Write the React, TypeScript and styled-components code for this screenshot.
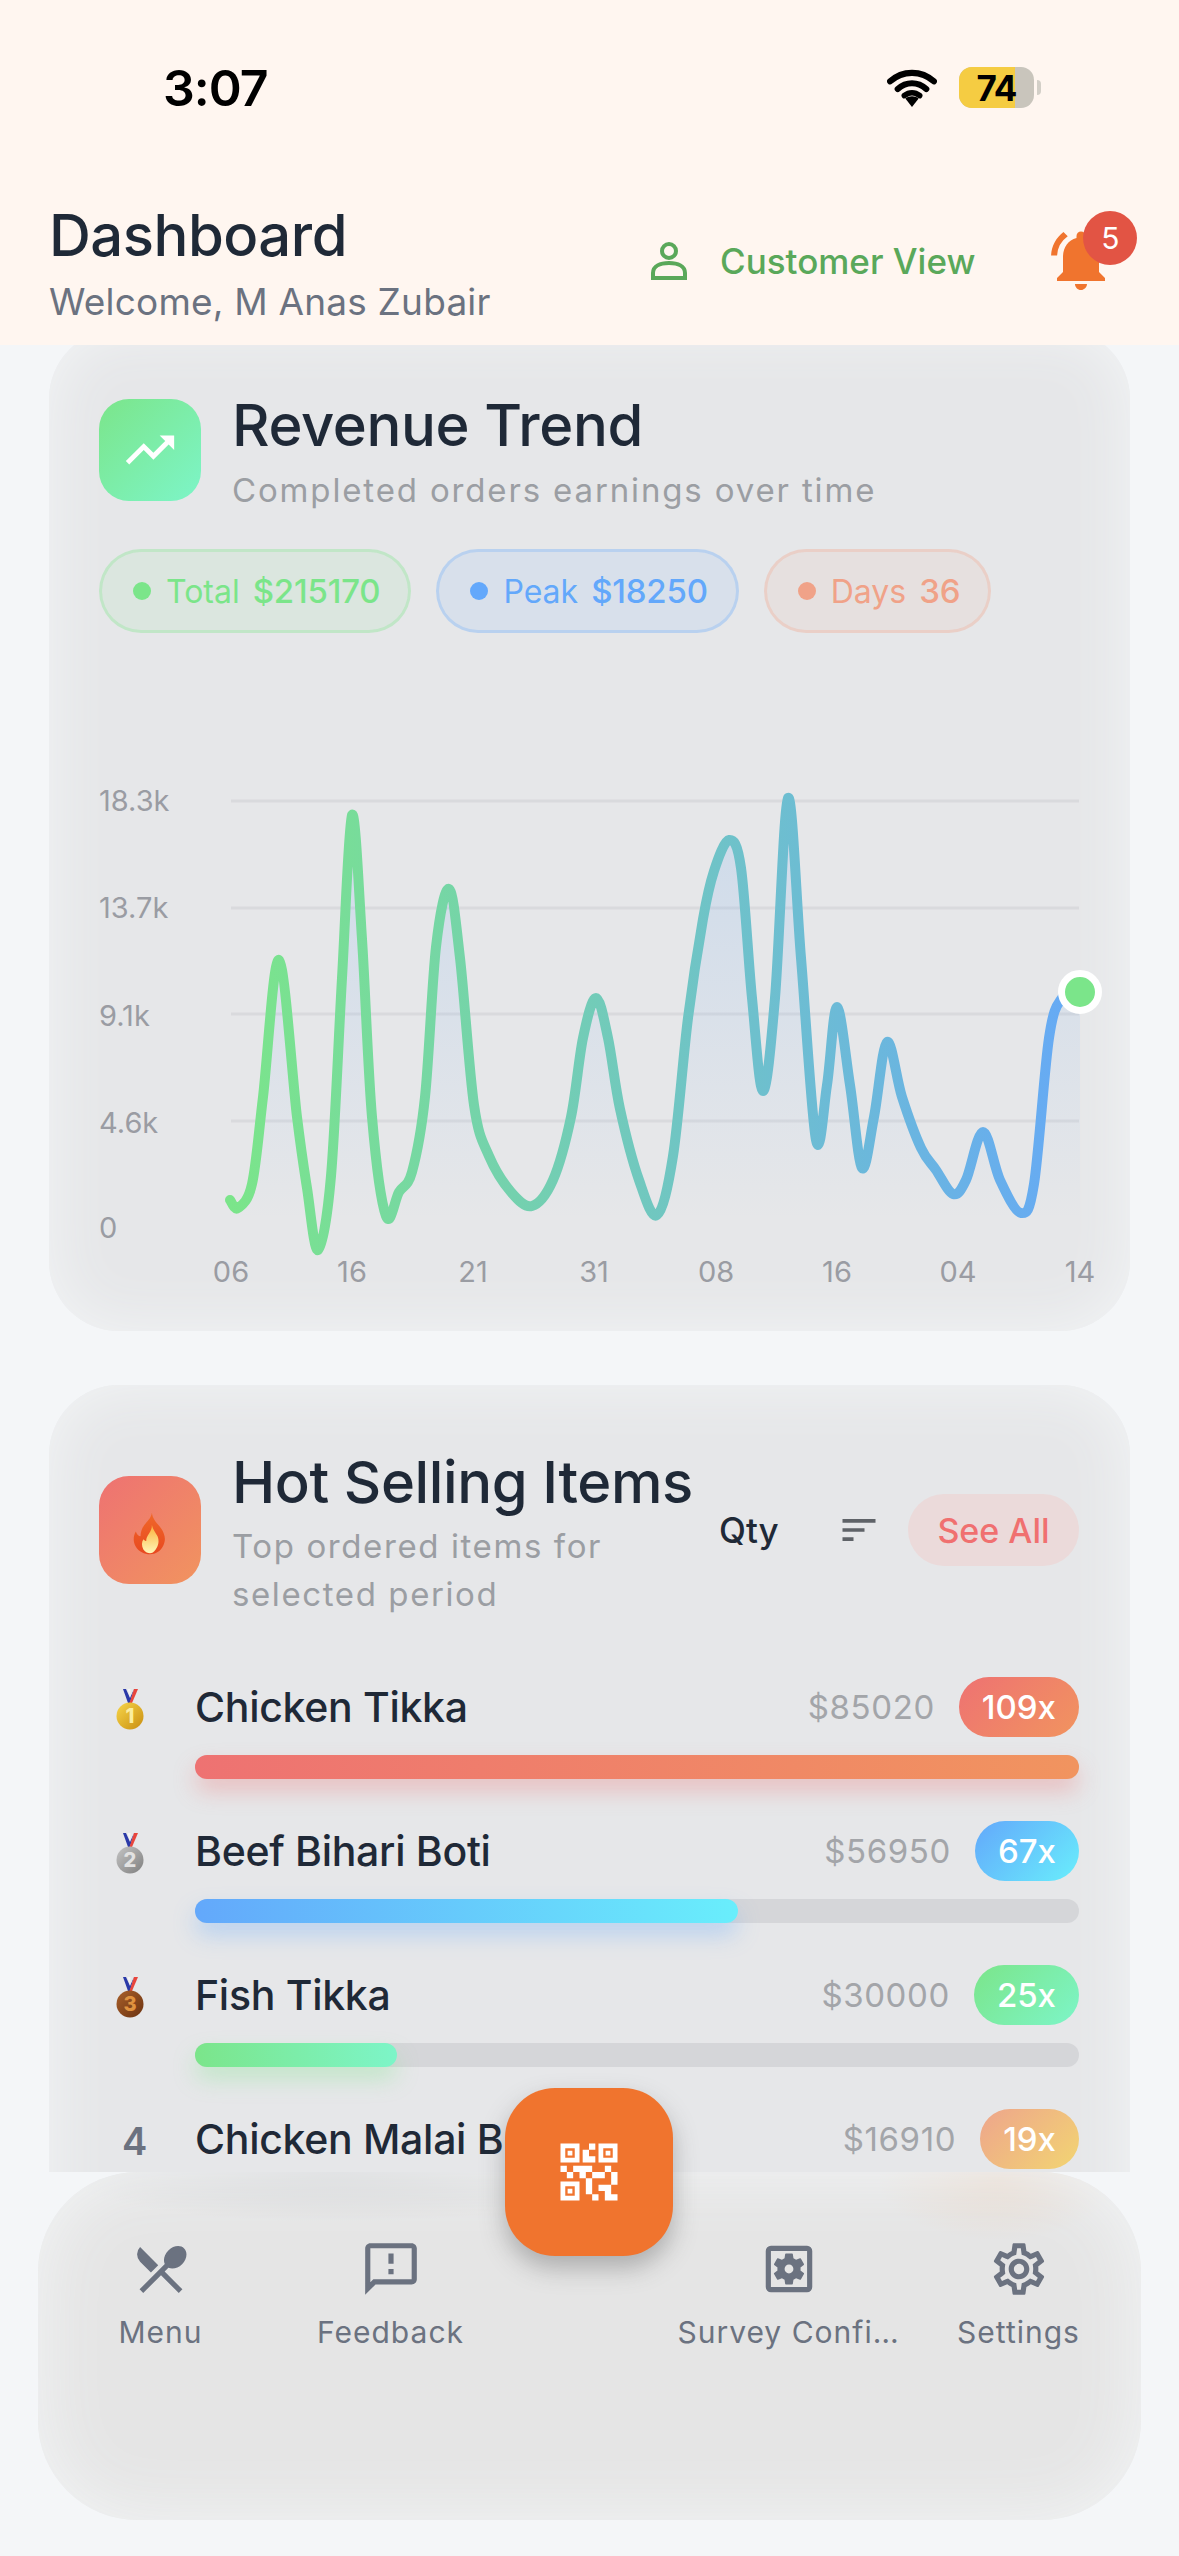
import React from 'react';
import styled, { createGlobalStyle } from 'styled-components';
import {
  MdTrendingUp,
  MdNotificationsActive,
  MdSort,
  MdRestaurantMenu,
  MdOutlineFeedback,
  MdOutlineSettingsApplications,
  MdOutlineSettings,
  MdQrCode2,
} from 'react-icons/md';

const GlobalStyle = createGlobalStyle`
  html, body {
    margin: 0;
    padding: 0;
    background: #f4f6f8;
    font-family: Inter, "Open Sans", sans-serif;
  }
  * { box-sizing: border-box; }
`;

const points: [number, number][] = [
  [131, 439], [139, 447], [153, 423], [164, 336], [180, 199], [198, 356], [208, 427], [219, 489],
  [232, 415], [243, 217], [253, 54], [263, 178], [273, 356], [287, 455], [300, 431], [313, 411],
  [326, 336], [337, 186], [350, 128], [361, 197], [375, 344], [390, 395], [412, 431], [433, 445],
  [454, 419], [472, 356], [484, 277], [497, 237], [509, 277], [521, 348], [540, 419], [558, 454],
  [574, 395], [589, 257], [604, 158], [615, 110], [630, 79], [642, 107], [653, 237], [664, 330],
  [676, 237], [689, 37], [702, 197], [717, 379], [728, 324], [738, 246], [751, 324], [763, 407],
  [775, 356], [788, 281], [803, 336], [822, 387], [837, 409], [854, 433], [867, 419], [884, 371],
  [901, 419], [922, 452], [935, 423], [950, 277], [963, 237], [981, 231],
];

const smoothPath = (p: [number, number][]) => {
  let d = `M${p[0][0]} ${p[0][1]}`;
  for (let i = 0; i < p.length - 1; i++) {
    const a = p[Math.max(i - 1, 0)];
    const b = p[i];
    const c = p[i + 1];
    const e = p[Math.min(i + 2, p.length - 1)];
    const c1x = b[0] + (c[0] - a[0]) / 6;
    const c1y = b[1] + (c[1] - a[1]) / 6;
    const c2x = c[0] - (e[0] - b[0]) / 6;
    const c2y = c[1] - (e[1] - b[1]) / 6;
    d += ` C${c1x.toFixed(1)} ${c1y.toFixed(1)} ${c2x.toFixed(1)} ${c2y.toFixed(1)} ${c[0]} ${c[1]}`;
  }
  return d;
};

const linePath = smoothPath(points);
const areaPath = `${linePath} L981 470 L131 470 Z`;

const grid = [
  { y: 40, label: '18.3k', ly: 42 },
  { y: 147, label: '13.7k', ly: 149 },
  { y: 253, label: '9.1k', ly: 257 },
  { y: 360, label: '4.6k', ly: 364 },
];
const xLabels = [
  { x: 132, label: '06' },
  { x: 253, label: '16' },
  { x: 374, label: '21' },
  { x: 495, label: '31' },
  { x: 617, label: '08' },
  { x: 738, label: '16' },
  { x: 859, label: '04' },
  { x: 981, label: '14' },
];

const gradients = {
  red: ['#ee7272', '#f1945f'],
  blue: ['#63a8fb', '#69eefc'],
  green: ['#7be58a', '#7df5c8'],
  sun: ['#eea58c', '#f2d572'],
};
type Tone = keyof typeof gradients;

const items: { rank: number; name: string; price: string; qty: string; tone: Tone; pct: number }[] = [
  { rank: 1, name: 'Chicken Tikka', price: '$85020', qty: '109x', tone: 'red', pct: 100 },
  { rank: 2, name: 'Beef Bihari Boti', price: '$56950', qty: '67x', tone: 'blue', pct: 61.4 },
  { rank: 3, name: 'Fish Tikka', price: '$30000', qty: '25x', tone: 'green', pct: 22.9 },
  { rank: 4, name: 'Chicken Malai Boti', price: '$16910', qty: '19x', tone: 'sun', pct: 17.4 },
];

const medals: Record<number, [string, string, string]> = {
  1: ['#f7d64a', '#c98e10', '#fbeea0'],
  2: ['#c4c4c4', '#7f7f7f', '#e2e2e2'],
  3: ['#a9602a', '#6b3210', '#e0923f'],
};

const Medal = ({ rank }: { rank: number }) => {
  const [from, to, digit] = medals[rank];
  return (
    <svg width="28" height="41" viewBox="0 0 28 41">
      <defs>
        <linearGradient id={`medal${rank}`} x1="0" y1="0" x2="1" y2="1">
          <stop offset="0" stopColor={from} />
          <stop offset="1" stopColor={to} />
        </linearGradient>
      </defs>
      <path d="M7 0h3l4 9 4-9h0l-4 14h-2L7 0z" fill="#2b3aa8" />
      <path d="M18 0h4l-6 14h-2.5z" fill="#e8453c" />
      <path d="M11.5 0h3l-.5 8z" fill="#f4f4f4" />
      <circle cx="14" cy="27" r="13.5" fill={`url(#medal${rank})`} />
      <text x="14" y="34" textAnchor="middle" fontSize="20" fontWeight="800" fontFamily="Inter, sans-serif" fill={digit}>
        {rank}
      </text>
    </svg>
  );
};

const Flame = () => (
  <svg width="34" height="43" viewBox="0 0 36 44">
    <defs>
      <linearGradient id="flameOuter" x1="0" y1="0" x2="0" y2="1">
        <stop offset="0" stopColor="#f0682a" />
        <stop offset="1" stopColor="#e8481f" />
      </linearGradient>
      <linearGradient id="flameInner" x1="0" y1="0" x2="0" y2="1">
        <stop offset="0" stopColor="#fbb03a" />
        <stop offset="1" stopColor="#fff6b8" />
      </linearGradient>
    </defs>
    <path d="M20 0c1 8 6 11 10 17 4 6 5 12 2 18-3 6-8 9-14 9S6 41 3 36c-3-5-3-11 0-16 1 3 3 5 5 5 0-4 1-8 4-12 3-4 7-7 8-13z" fill="url(#flameOuter)" />
    <path d="M20 13c1 5 4 8 6 12 2 5 1 10-2 14-2 3-4 4-6 4s-5-1-7-4c-2-4-2-8 0-11 1 1 2 2 3 2 0-3 1-5 3-8 2-3 3-5 3-9z" fill="url(#flameInner)" />
  </svg>
);

export default function App() {
  return (
    <Screen>
      <GlobalStyle />
      <Header>
        <StatusBar>
          <Clock>3:07</Clock>
          <StatusIcons>
            <svg width="50" height="38" viewBox="0 0 52 40">
              <path d="M3 13C16 1 36 1 49 13" fill="none" stroke="#000" strokeWidth="6.5" strokeLinecap="round" />
              <path d="M11 21c9-8 21-8 30 0" fill="none" stroke="#000" strokeWidth="6.5" strokeLinecap="round" />
              <path d="M18 28c5-4 11-4 16 0" fill="none" stroke="#000" strokeWidth="6" strokeLinecap="round" />
              <path d="M26 40l-7-9c4-3 10-3 14 0z" fill="#000" />
            </svg>
            <Battery>
              <BatteryFill />
              <BatteryText>74</BatteryText>
              <BatteryNub />
            </Battery>
          </StatusIcons>
        </StatusBar>
        <TitleRow>
          <TitleBlock>
            <PageTitle>Dashboard</PageTitle>
            <Welcome>Welcome, M Anas Zubair</Welcome>
          </TitleBlock>
          <CustomerLink>
            <svg width="38" height="38" viewBox="0 0 38 38" fill="none" stroke="#5aa85a" strokeWidth="4">
              <circle cx="19" cy="9" r="7" />
              <path d="M3 36v-5c0-7 7-10 16-10s16 3 16 10v5z" />
            </svg>
            <CustomerText>Customer View</CustomerText>
          </CustomerLink>
          <BellWrap>
            <MdNotificationsActive size={72} color="#f0742e" />
            <BellBadge>5</BellBadge>
          </BellWrap>
        </TitleRow>
      </Header>

      <Main>
        <RevenueCard>
          <CardHead>
            <IconTile $tone="green">
              <MdTrendingUp size={58} color="#fff" />
            </IconTile>
            <div>
              <CardTitle>Revenue Trend</CardTitle>
              <CardSub>Completed orders earnings over time</CardSub>
            </div>
          </CardHead>
          <Pills>
            <Pill $color="#7be58a">
              <PillDot />
              <PillLabel>Total</PillLabel>
              <PillValue>$215170</PillValue>
            </Pill>
            <Pill $color="#63a8fb">
              <PillDot />
              <PillLabel>Peak</PillLabel>
              <PillValue>$18250</PillValue>
            </Pill>
            <Pill $color="#f0a288">
              <PillDot />
              <PillLabel>Days</PillLabel>
              <PillValue>36</PillValue>
            </Pill>
          </Pills>
          <Chart width="1010" height="540" viewBox="0 0 1010 540">
            <defs>
              <linearGradient id="lineGrad" gradientUnits="userSpaceOnUse" x1="131" y1="0" x2="981" y2="0">
                <stop offset="0" stopColor="#7be58a" />
                <stop offset="1" stopColor="#66a9f6" />
              </linearGradient>
              <linearGradient id="areaGrad" gradientUnits="userSpaceOnUse" x1="0" y1="40" x2="0" y2="460">
                <stop offset="0" stopColor="#6aa8f0" stopOpacity="0.2" />
                <stop offset="1" stopColor="#6aa8f0" stopOpacity="0" />
              </linearGradient>
            </defs>
            {grid.map((g) => (
              <React.Fragment key={g.label}>
                <line x1="132" x2="980" y1={g.y} y2={g.y} stroke="#d9dadd" strokeWidth="3" />
                <AxisText x="0" y={g.ly} dominantBaseline="middle">{g.label}</AxisText>
              </React.Fragment>
            ))}
            <AxisText x="0" y="469" dominantBaseline="middle">0</AxisText>
            {xLabels.map((l, i) => (
              <AxisText key={i} x={l.x} y="513" textAnchor="middle" dominantBaseline="middle">{l.label}</AxisText>
            ))}
            <path d={areaPath} fill="url(#areaGrad)" />
            <path d={linePath} fill="none" stroke="url(#lineGrad)" strokeWidth="10" strokeLinecap="round" strokeLinejoin="round" />
            <circle cx="981" cy="231" r="18.5" fill="#7be58a" stroke="#fff" strokeWidth="7" />
          </Chart>
        </RevenueCard>

        <HotCard>
          <HotHead>
            <IconTile $tone="red" $tall>
              <FlameSpot><Flame /></FlameSpot>
            </IconTile>
            <HotText>
              <CardTitle>Hot Selling Items</CardTitle>
              <HotSub>Top ordered items for selected period</HotSub>
            </HotText>
            <QtyLabel>Qty</QtyLabel>
            <SortButton><MdSort size={44} color="#5f6368" /></SortButton>
            <SeeAll>See All</SeeAll>
          </HotHead>
          {items.map((item) => (
            <Row key={item.rank}>
              <Rank>{item.rank < 4 ? <Medal rank={item.rank} /> : <RankNumber>{item.rank}</RankNumber>}</Rank>
              <RowBody>
                <RowTop>
                  <ItemName>{item.name}</ItemName>
                  <Price>{item.price}</Price>
                  <QtyBadge $tone={item.tone}>{item.qty}</QtyBadge>
                </RowTop>
                <Track>
                  <Fill $tone={item.tone} style={{ width: `${item.pct}%` }} />
                </Track>
              </RowBody>
            </Row>
          ))}
        </HotCard>
      </Main>

      <BottomNav>
        <Fab><MdQrCode2 size={76} color="#fff" /></Fab>
        <NavItem>
          <MdRestaurantMenu size={62} />
          <NavLabel>Menu</NavLabel>
        </NavItem>
        <NavItem>
          <MdOutlineFeedback size={62} />
          <NavLabel>Feedback</NavLabel>
        </NavItem>
        <span />
        <NavItem>
          <MdOutlineSettingsApplications size={62} />
          <NavLabel>Survey Confi…</NavLabel>
        </NavItem>
        <NavItem>
          <MdOutlineSettings size={62} />
          <NavLabel>Settings</NavLabel>
        </NavItem>
      </BottomNav>
    </Screen>
  );
}

const Screen = styled.div`
  width: 1179px;
  height: 2556px;
  overflow: hidden;
  background: #f4f6f8;
  display: flex;
  flex-direction: column;
  color: #1f2937;
`;

const Header = styled.header`
  height: 345px;
  flex: none;
  background: #fff6f0;
`;

const StatusBar = styled.div`
  height: 175px;
  display: flex;
  align-items: center;
  justify-content: space-between;
  padding: 0 145px 0 163px;
`;

const Clock = styled.div`
  font-size: 50px;
  font-weight: 600;
  color: #000;
  letter-spacing: -1px;
`;

const StatusIcons = styled.div`
  display: flex;
  align-items: center;
  gap: 22px;
`;

const Battery = styled.div`
  position: relative;
  width: 75px;
  height: 41px;
  border-radius: 13px;
  background: #c9c5bc;
  display: flex;
  align-items: center;
  justify-content: center;
`;

const BatteryFill = styled.div`
  position: absolute;
  left: 0;
  top: 0;
  bottom: 0;
  width: 74%;
  border-radius: 13px 0 0 13px;
  background: #f5cc42;
`;

const BatteryText = styled.span`
  position: relative;
  font-size: 35px;
  font-weight: 700;
  color: #000;
  letter-spacing: -1px;
`;

const BatteryNub = styled.div`
  position: absolute;
  right: -7px;
  top: 13px;
  width: 4px;
  height: 15px;
  border-radius: 0 4px 4px 0;
  background: #d3cfc7;
`;

const TitleRow = styled.div`
  display: flex;
  align-items: center;
  padding: 27px 0 0 49px;
`;

const TitleBlock = styled.div`
  width: 601px;
`;

const PageTitle = styled.h1`
  margin: 0;
  font-size: 58px;
  line-height: 66px;
  font-weight: 500;
  letter-spacing: -0.5px;
  color: #1f2937;
`;

const Welcome = styled.div`
  margin-top: 12px;
  font-size: 37px;
  line-height: 44px;
  font-weight: 400;
  letter-spacing: 0.2px;
  color: #6b7280;
`;

const CustomerLink = styled.div`
  display: flex;
  align-items: center;
  gap: 32px;
  margin-top: -4px;
`;

const CustomerText = styled.span`
  font-size: 35px;
  font-weight: 500;
  color: #5aa85a;
`;

const BellWrap = styled.div`
  position: relative;
  margin-left: 70px;
  margin-top: -6px;
  width: 72px;
  height: 72px;
  display: flex;
`;

const BellBadge = styled.div`
  position: absolute;
  right: -20px;
  top: -13px;
  width: 54px;
  height: 54px;
  border-radius: 50%;
  background: #e25444;
  color: #fff;
  font-size: 30px;
  display: flex;
  align-items: center;
  justify-content: center;
`;

const Main = styled.main`
  height: 1827px;
  flex: none;
  overflow: hidden;
  padding: 0 49px;
`;

const Card = styled.section`
  width: 1081px;
  border-radius: 70px;
  background: #e6e7e9;
  box-shadow: inset 0 0 60px #f3f5f6;
  padding-left: 50px;
  padding-right: 51px;
`;

const RevenueCard = styled(Card)`
  height: 1002px;
  margin-top: -16px;
  padding-top: 70px;
`;

const HotCard = styled(Card)`
  margin-top: 54px;
  height: 1000px;
  padding-top: 49px;
`;

const CardHead = styled.div`
  display: flex;
  gap: 31px;
`;

const IconTile = styled.div<{ $tone: Tone; $tall?: boolean }>`
  flex: none;
  width: 102px;
  height: ${(p) => (p.$tall ? '108px' : '102px')};
  border-radius: 30px;
  background: linear-gradient(135deg, ${(p) => gradients[p.$tone][0]}, ${(p) => gradients[p.$tone][1]});
  display: flex;
  align-items: center;
  justify-content: center;
`;

const CardTitle = styled.h2`
  margin: 0;
  font-size: 58px;
  line-height: 52px;
  font-weight: 500;
  letter-spacing: -0.4px;
  color: #1f2937;
  white-space: nowrap;
`;

const CardSub = styled.div`
  margin-top: 19px;
  font-size: 33px;
  line-height: 40px;
  letter-spacing: 1.85px;
  color: #9b9ea3;
  white-space: nowrap;
`;

const Pills = styled.div`
  display: flex;
  gap: 25px;
  margin-top: 39px;
`;

const Pill = styled.div<{ $color: string }>`
  height: 84px;
  padding: 0 28px 0 31px;
  border-radius: 42px;
  color: ${(p) => p.$color};
  border: 3px solid color-mix(in srgb, ${(p) => p.$color} 28%, transparent);
  background: color-mix(in srgb, ${(p) => p.$color} 10%, transparent);
  display: flex;
  align-items: center;
  font-size: 32px;
`;

const PillDot = styled.span`
  width: 18px;
  height: 18px;
  border-radius: 50%;
  background: currentColor;
  margin-right: 15px;
`;

const PillLabel = styled.span`
  margin-right: 13px;
`;

const PillValue = styled.span`
  font-weight: 500;
  font-size: 33px;
  letter-spacing: -0.2px;
`;

const Chart = styled.svg`
  display: block;
  margin-top: 128px;
  overflow: visible;
`;

const AxisText = styled.text`
  font-family: Inter, sans-serif;
  font-size: 29px;
  fill: #9a9ca3;
`;

const HotHead = styled.div`
  display: flex;
  align-items: center;
  height: 192px;
`;

const FlameSpot = styled.div`
  display: flex;
  margin-top: 6px;
`;

const HotText = styled.div`
  width: 487px;
  flex: none;
  margin-left: 31px;
  margin-top: 14px;
`;

const HotSub = styled.div`
  margin-top: 14px;
  width: 470px;
  font-size: 33px;
  line-height: 48px;
  letter-spacing: 1.6px;
  color: #9b9ea3;
`;

const QtyLabel = styled.div`
  font-size: 35px;
  font-weight: 500;
  color: #1f2937;
  width: 118px;
`;

const SortButton = styled.div`
  display: flex;
  width: 71px;
`;

const SeeAll = styled.div`
  width: 171px;
  height: 72px;
  border-radius: 36px;
  background: #ebdada;
  color: #f07070;
  font-size: 34px;
  font-weight: 500;
  display: flex;
  align-items: center;
  justify-content: center;
`;

const Row = styled.div`
  display: flex;
  margin-top: 42px;
  &:nth-of-type(2) {
    margin-top: 51px;
  }
`;

const Rank = styled.div`
  width: 96px;
  flex: none;
  height: 60px;
  padding-left: 17px;
  padding-top: 12px;
`;

const RankNumber = styled.div`
  font-size: 38px;
  font-weight: 600;
  color: #6b7280;
  line-height: 40px;
  padding-left: 6px;
`;

const RowBody = styled.div`
  flex: 1;
  min-width: 0;
`;

const RowTop = styled.div`
  display: flex;
  align-items: center;
  height: 60px;
`;

const ItemName = styled.div`
  flex: 1;
  font-size: 41px;
  font-weight: 500;
  letter-spacing: -0.3px;
  color: #1f2937;
  white-space: nowrap;
`;

const Price = styled.div`
  font-size: 33px;
  letter-spacing: 0.6px;
  color: #a3a5a9;
  margin-right: 24px;
`;

const QtyBadge = styled.div<{ $tone: Tone }>`
  height: 60px;
  padding: 0 23px;
  border-radius: 30px;
  background: linear-gradient(135deg, ${(p) => gradients[p.$tone][0]}, ${(p) => gradients[p.$tone][1]});
  color: #fff;
  font-size: 33px;
  font-weight: 500;
  display: flex;
  align-items: center;
`;

const Track = styled.div`
  height: 24px;
  margin-top: 18px;
  border-radius: 12px;
  background: #d5d6d9;
`;

const Fill = styled.div<{ $tone: Tone }>`
  height: 100%;
  border-radius: 12px;
  background: linear-gradient(90deg, ${(p) => gradients[p.$tone][0]}, ${(p) => gradients[p.$tone][1]});
  box-shadow: 0 12px 22px color-mix(in srgb, ${(p) => gradients[p.$tone][0]} 35%, transparent);
`;

const BottomNav = styled.nav`
  position: relative;
  width: 1103px;
  height: 348px;
  flex: none;
  margin-left: 38px;
  border-radius: 100px;
  background:
    radial-gradient(ellipse 280px 50px at 300px 0, rgba(190, 192, 196, 0.5), transparent),
    radial-gradient(ellipse 120px 60px at 960px 8px, rgba(240, 180, 130, 0.22), transparent),
    #e5e5e5;
  box-shadow: inset 0 0 70px #f3f5f6;
  display: grid;
  grid-template-columns: 230px 230px 168px 230px 230px;
  justify-content: center;
  align-items: start;
  padding-top: 66px;
`;

const Fab = styled.div`
  position: absolute;
  top: -84px;
  left: 467px;
  width: 168px;
  height: 168px;
  border-radius: 50px;
  background: #f0742e;
  box-shadow: 0 12px 24px rgba(70, 70, 70, 0.35);
  display: flex;
  align-items: center;
  justify-content: center;
`;

const NavItem = styled.div`
  display: flex;
  flex-direction: column;
  align-items: center;
  color: #6b7280;
`;

const NavLabel = styled.span`
  margin-top: 12px;
  font-size: 30px;
  line-height: 40px;
  letter-spacing: 1px;
  white-space: nowrap;
`;
